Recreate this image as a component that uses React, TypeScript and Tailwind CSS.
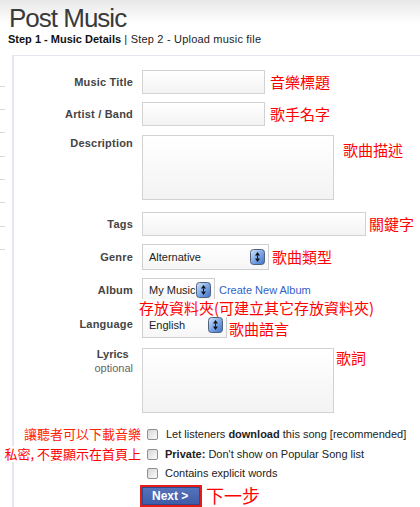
import React from 'react';

const cjk = "font-['Noto_Sans_CJK_TC',sans-serif]";

// little blue up/down button used by the old style selects
const SpinButton = () => (
  <svg width="15" height="16" viewBox="0 0 15 16" className="shrink-0">
    <defs>
      <linearGradient id="spin" x1="0" y1="0" x2="1" y2="1">
        <stop offset="0" stopColor="#d8e8fb" />
        <stop offset="0.5" stopColor="#7ea8e6" />
        <stop offset="1" stopColor="#3d6fc7" />
      </linearGradient>
    </defs>
    <rect x="0.5" y="0.5" width="14" height="15" rx="3" fill="url(#spin)" stroke="#52627d" />
    <path d="M7.5 3 L10 6.5 L5 6.5 Z" fill="#111" />
    <path d="M7.5 13 L10 9.5 L5 9.5 Z" fill="#111" />
    <rect x="7" y="6.5" width="1" height="3" fill="#111" />
  </svg>
);

const Select = ({ value, width, h = 25 }: { value: string; width: string; h?: number }) => (
  <div
    className={`${width} flex items-center justify-between pl-[6px] pr-[3px] border border-[#cfcfcf] bg-gradient-to-b from-white to-[#f6f6f6] text-[11px] text-[#222] shrink-0`}
    style={{ height: h }}
  >
    <span>{value}</span>
    <SpinButton />
  </div>
);

const Input = ({ width, h = 24 }: { width: string; h?: number }) => (
  <div
    className={`${width} border border-[#d2d2d2] bg-gradient-to-b from-white to-[#f3f3f3] shrink-0`}
    style={{ height: h }}
  />
);

const Note = ({ children, className = '' }: { children: React.ReactNode; className?: string }) => (
  <span className={`${cjk} text-[15px] leading-[18px] text-[#ff0000] whitespace-nowrap ${className}`}>
    {children}
  </span>
);

const Label = ({ children, className = '' }: { children: React.ReactNode; className?: string }) => (
  <div className={`flex justify-end items-center text-[11px] font-bold text-[#444] tracking-[0.2px] ${className}`}>{children}</div>
);

const Checkbox = () => (
  <div className="w-[11px] h-[11px] rounded-[2px] border border-[#8f8f8f] bg-gradient-to-br from-[#d6d6d6] to-[#fbfbfb] shrink-0" />
);

export default function App() {
  const ticks = [87, 110, 133, 157, 180, 203, 227, 250];

  return (
    <div className="w-[420px] h-[507px] overflow-hidden bg-white font-['Liberation_Sans',Arial,sans-serif] text-[#222]">
      {/* header */}
      <div className="bg-[linear-gradient(#e8e8e8,#ffffff_24px)] pl-[9px] pt-[3px]">
        <h1 className="text-[26px] leading-[30px] tracking-[-1px] text-[#3a3a3a] font-normal">Post Music</h1>
        <div className="text-[11px] leading-[14px] -mt-[1px] -ml-[1px]">
          <span className="font-bold text-[#111]">Step 1 - Music Details</span>
          <span className="text-[#222] tracking-[0.2px]"> | Step 2 - Upload music file</span>
        </div>
      </div>

      <div className="flex mt-[9px]">
        {/* faint gutter marks */}
        <div className="w-[12px] shrink-0 relative">
          {ticks.map((t) => (
            <div key={t} className="absolute left-0 w-[5px] h-px bg-[#d9d9d9]" style={{ top: t - 56 }} />
          ))}
        </div>

        {/* form panel */}
        <div className="flex-1 border-l-2 border-t border-[#e6e6f0] pt-[14px] h-[460px]">
          <div className="grid grid-cols-[119px_1fr] gap-x-[9px]">
            {/* Music title */}
            <Label className="h-[24px]">Music Title</Label>
            <div className="flex items-center gap-[5px]">
              <Input width="w-[123px]" />
              <Note>音樂標題</Note>
            </div>

            {/* Artist */}
            <Label className="h-[24px] mt-[8px]">Artist / Band</Label>
            <div className="flex items-center gap-[5px] mt-[8px]">
              <Input width="w-[123px]" />
              <Note>歌手名字</Note>
            </div>

            {/* Description */}
            <Label className="mt-[9px] !items-start pt-[1px] leading-[14px]">Description</Label>
            <div className="flex items-start gap-[9px] mt-[9px]">
              <Input width="w-[192px]" h={65} />
              <Note className="mt-[6px]">歌曲描述</Note>
            </div>

            {/* Tags */}
            <Label className="h-[24px] mt-[12px]">Tags</Label>
            <div className="flex items-center gap-[3px] mt-[12px]">
              <Input width="w-[224px]" />
              <Note>關鍵字</Note>
            </div>

            {/* Genre */}
            <Label className="h-[26px] mt-[8px]">Genre</Label>
            <div className="flex items-center gap-[3px] mt-[8px]">
              <Select value="Alternative" width="w-[127px]" h={26} />
              <Note>歌曲類型</Note>
            </div>

            {/* Album */}
            <Label className="h-[24px] mt-[8px]">Album</Label>
            <div className="relative flex items-center gap-[4px] mt-[8px] h-[24px]">
              <Select value="My Music" width="w-[73px]" h={24} />
              <span className="text-[11px] text-[#3460c8]">Create New Album</span>
              <Note className="absolute left-[-3px] top-[21px] bg-white pr-[1px]">存放資料夾(可建立其它存放資料夾)</Note>
            </div>

            {/* Language */}
            <Label className="h-[25px] mt-[10px]">Language</Label>
            <div className="flex items-center gap-[2px] mt-[10px]">
              <Select value="English" width="w-[85px]" />
              <Note className="mt-[8px]">歌曲語言</Note>
            </div>

            {/* Lyrics */}
            <div className="mt-[10px] flex justify-end">
              <div className="flex flex-col items-center leading-[14px] -mt-[1px]">
                <span className="text-[11px] font-bold text-[#444] mr-[2px]">Lyrics</span>
                <span className="text-[11px] text-[#666]">optional</span>
              </div>
            </div>
            <div className="flex items-start gap-[2px] mt-[10px]">
              <Input width="w-[192px]" h={65} />
              <Note className="mt-[1px]">歌詞</Note>
            </div>

            {/* options */}
            <div className="flex justify-end items-center h-[16px] mt-[13px] -mr-[8px]">
              <span className={`${cjk} text-[13px] leading-[16px] text-[#ff2200] bg-white whitespace-nowrap`}>讓聽者可以下載音樂</span>
            </div>
            <div className="flex items-center gap-[8px] h-[16px] mt-[13px] pl-[5px] text-[11px]">
              <Checkbox />
              <span>
                Let listeners <b>download</b> this song [recommended]
              </span>
            </div>

            <div className="flex justify-end items-center h-[16px] mt-[4px] -mr-[8px] relative z-10">
              <span className={`${cjk} text-[13px] leading-[16px] text-[#ff0000] bg-white whitespace-nowrap`}>私密, 不要顯示在首頁上</span>
            </div>
            <div className="flex items-center gap-[7px] h-[16px] mt-[4px] pl-[5px] text-[11px]">
              <Checkbox />
              <span>
                <b>Private:</b> Don't show on Popular Song list
              </span>
            </div>

            <div className="h-[16px] mt-[3px]" />
            <div className="flex items-center gap-[7px] h-[16px] mt-[3px] pl-[5px] text-[11px]">
              <Checkbox />
              <span>Contains explicit words</span>
            </div>

            <div className="mt-[4px]" />
            <div className="flex items-start gap-[4px] mt-[4px] -ml-[2px]">
              <div className="w-[62px] h-[22px] border-2 border-[#e41b17] shrink-0">
                <div className="w-full h-full border border-[#2c4a8c] bg-gradient-to-b from-[#5573bb] to-[#3f5ea7] flex items-center pl-[9px] text-white text-[12px] font-bold">
                  Next &gt;
                </div>
              </div>
              <span className={`${cjk} text-[18px] leading-[18px] text-[#ff0000] mt-[1px]`}>下一步</span>
            </div>
          </div>
        </div>
      </div>
    </div>
  );
}
